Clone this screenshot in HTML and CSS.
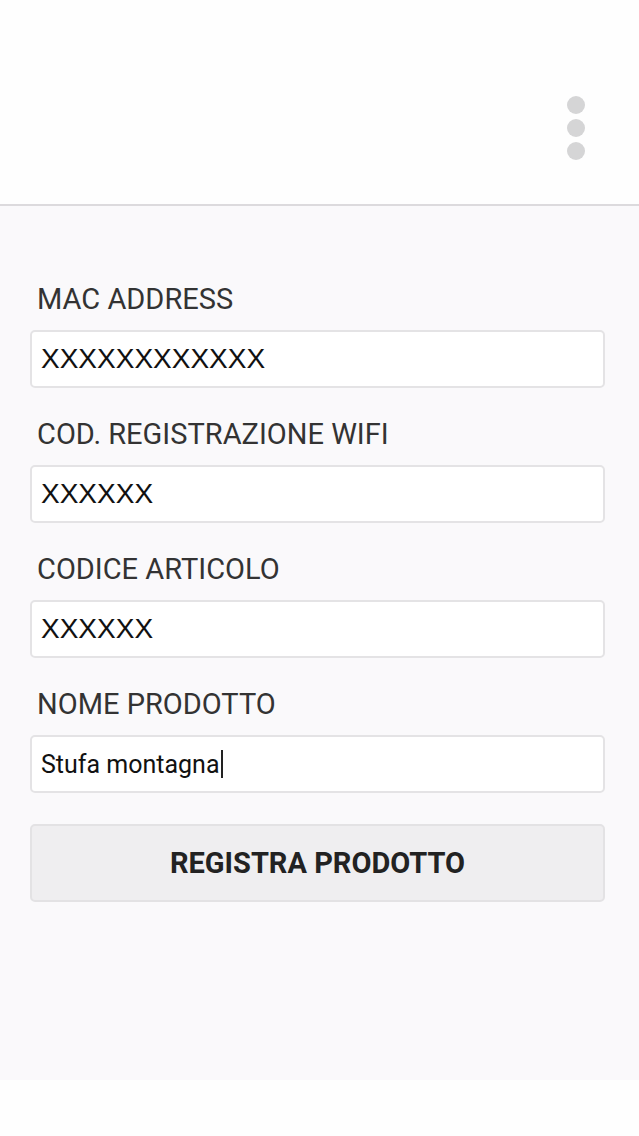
FILE: index.html
```html
<!doctype html>
<html lang="it">
    <head>
        <meta charset="UTF-8" />
        <meta name="viewport" content="width=device-width, initial-scale=1.0" />
        <title>Registra prodotto</title>
        <link rel="stylesheet" href="styles.css">
    </head>
    <body>
        <div class="topbar">
            <div class="menu">
                <span class="dot"></span>
                <span class="dot"></span>
                <span class="dot"></span>
            </div>
        </div>

        <div class="content">
            <form class="form">
                <label class="field">
                    <span class="label">MAC ADDRESS</span>
                    <span class="input code">XXXXXXXXXXXX</span>
                </label>
                <label class="field">
                    <span class="label">COD. REGISTRAZIONE WIFI</span>
                    <span class="input code">XXXXXX</span>
                </label>
                <label class="field">
                    <span class="label">CODICE ARTICOLO</span>
                    <span class="input code">XXXXXX</span>
                </label>
                <label class="field">
                    <span class="label">NOME PRODOTTO</span>
                    <span class="input name">Stufa montagna<span class="caret"></span></span>
                </label>
                <button type="button" class="submit">REGISTRA PRODOTTO</button>
            </form>
        </div>
    </body>
</html>
```

FILE: styles.css
```css
body {
    margin: 0;
    background-color: #fefefe;
    font-family: Roboto, "Noto Sans", sans-serif;
    color: #222;
}
.topbar {
    height: 204px;
    background-color: #fefefe;
    border-bottom: 2px solid #dcdadd;
    display: flex;
    justify-content: flex-end;
    align-items: flex-start;
}
.menu {
    display: flex;
    flex-direction: column;
    gap: 5px;
    margin-top: 96px;
    margin-right: 54px;
}
.dot {
    width: 18px;
    height: 18px;
    border-radius: 50%;
    background-color: #d5d5d6;
}
.content {
    height: 874px;
    background-color: #faf9fb;
    padding: 78px 34px 0 30px;
    box-sizing: border-box;
}
.form {
    display: flex;
    flex-direction: column;
}
.field {
    display: flex;
    flex-direction: column;
    margin-bottom: 31px;
}
.label {
    font-size: 29px;
    color: #333;
    padding-left: 7px;
    line-height: 30px;
    margin-bottom: 16px;
}
.input {
    height: 58px;
    box-sizing: border-box;
    background-color: #fff;
    border: 2px solid #e4e3e5;
    border-radius: 5px;
    display: flex;
    align-items: center;
    padding-left: 9px;
    color: #111;
}
.code {
    font-family: "Liberation Sans", Arial, sans-serif;
    font-size: 28px;
}
.name {
    font-size: 25px;
}
.caret {
    display: inline-block;
    width: 2px;
    height: 28px;
    background-color: #222;
    margin-left: 1px;
}
.submit {
    height: 78px;
    background-color: #efeef0;
    border: 2px solid #e3e2e4;
    border-radius: 5px;
    font-family: Roboto, "Noto Sans", sans-serif;
    font-weight: bold;
    font-size: 29px;
    color: #222;
    cursor: pointer;
}
```
